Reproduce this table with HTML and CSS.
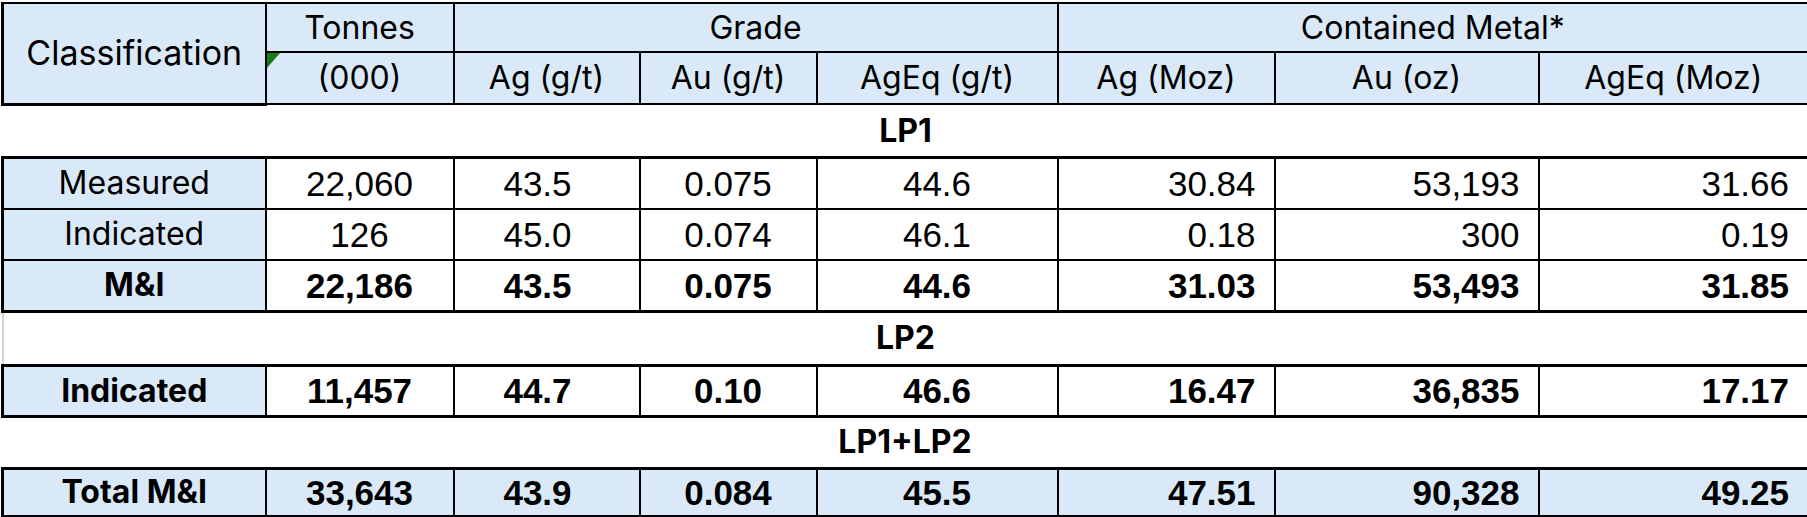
FILE: index.html
```html
<!DOCTYPE html>
<html lang="en">
<head>
<meta charset="utf-8">
<title>Mineral Resource Estimate</title>
<link rel="stylesheet" href="styles.css">
</head>
<body>
<table class="resources">
  <colgroup>
    <col class="c-class">
    <col class="c-tonnes">
    <col class="c-ag">
    <col class="c-au">
    <col class="c-ageq">
    <col class="c-agmoz">
    <col class="c-auoz">
    <col class="c-ageqmoz">
  </colgroup>
  <thead>
    <tr class="hdr1">
      <th rowspan="2" class="cls">Classification</th>
      <th>Tonnes</th>
      <th colspan="3">Grade</th>
      <th colspan="3" class="last">Contained Metal*</th>
    </tr>
    <tr class="hdr2">
      <th class="unit"><span class="flag"></span>(000)</th>
      <th>Ag (g/t)</th>
      <th>Au (g/t)</th>
      <th>AgEq (g/t)</th>
      <th>Ag (Moz)</th>
      <th>Au (oz)</th>
      <th class="last">AgEq (Moz)</th>
    </tr>
  </thead>
  <tbody>
    <tr class="section"><td colspan="8">LP1</td></tr>
    <tr class="data first r-meas">
      <td class="label">Measured</td>
      <td class="num ctr">22,060</td>
      <td class="num ag">43.5</td>
      <td class="num ctr">0.075</td>
      <td class="num ctr">44.6</td>
      <td class="num rt">30.84</td>
      <td class="num rt">53,193</td>
      <td class="num rt last">31.66</td>
    </tr>
    <tr class="data r-ind">
      <td class="label">Indicated</td>
      <td class="num ctr">126</td>
      <td class="num ag">45.0</td>
      <td class="num ctr">0.074</td>
      <td class="num ctr">46.1</td>
      <td class="num rt">0.18</td>
      <td class="num rt">300</td>
      <td class="num rt last">0.19</td>
    </tr>
    <tr class="data bold lastrow r-mi">
      <td class="label">M&amp;I</td>
      <td class="num ctr">22,186</td>
      <td class="num ag">43.5</td>
      <td class="num ctr">0.075</td>
      <td class="num ctr">44.6</td>
      <td class="num rt">31.03</td>
      <td class="num rt">53,493</td>
      <td class="num rt last">31.85</td>
    </tr>
    <tr class="section sec-lp2"><td colspan="8">LP2</td></tr>
    <tr class="data bold first lastrow r-lp2">
      <td class="label">Indicated</td>
      <td class="num ctr">11,457</td>
      <td class="num ag">44.7</td>
      <td class="num ctr">0.10</td>
      <td class="num ctr">46.6</td>
      <td class="num rt">16.47</td>
      <td class="num rt">36,835</td>
      <td class="num rt last">17.17</td>
    </tr>
    <tr class="section sec-all"><td colspan="8">LP1+LP2</td></tr>
    <tr class="data bold first lastrow total r-tot">
      <td class="label">Total M&amp;I</td>
      <td class="num ctr">33,643</td>
      <td class="num ag">43.9</td>
      <td class="num ctr">0.084</td>
      <td class="num ctr">45.5</td>
      <td class="num rt">47.51</td>
      <td class="num rt">90,328</td>
      <td class="num rt last">49.25</td>
    </tr>
  </tbody>
</table>
</body>
</html>
```
FILE: styles.css
```css
html, body {
  margin: 0;
  padding: 0;
  background: #ffffff;
}

body {
  padding: 2px 0 0 1px;
}

.resources {
  border-collapse: collapse;
  table-layout: fixed;
  width: 1806px;
  color: #000;
  font-family: "Inter", "Liberation Sans", sans-serif;
}

.c-class { width: 263px; }
.c-tonnes { width: 188px; }
.c-ag { width: 186px; }
.c-au { width: 177px; }
.c-ageq { width: 241px; }
.c-agmoz { width: 217px; }
.c-auoz { width: 264px; }
.c-ageqmoz { width: 270px; }

.resources th,
.resources td {
  padding: 0;
  line-height: 1;
  white-space: nowrap;
}

/* header */
.resources thead th {
  background: #dae9f8;
  font-weight: 400;
  font-size: 32px;
  text-align: center;
  vertical-align: middle;
  border: 2px solid #000;
}

.hdr1 th { border-top: 3px solid #000; height: 47px; }
.hdr2 th { border-bottom: 3px solid #000; height: 50px; }
.resources thead th.cls {
  border-left: 3px solid #000;
  border-bottom: 3px solid #000;
  font-size: 34px;
}
.resources thead th.last { border-right: 3px solid #000; }

.unit { position: relative; }
.flag {
  position: absolute;
  top: 0;
  left: 0;
  width: 0;
  height: 0;
  border-top: 15px solid #1b7a1b;
  border-right: 13px solid transparent;
}

/* section label rows */
.section td {
  text-align: center;
  vertical-align: middle;
  font-weight: 700;
  font-size: 32px;
  border: none;
  height: 50px;
  background: #fff;
}
.sec-lp2 td {
  height: 51px;
  border-left: 2px solid #d4d4d4;
  border-right: 2px solid #e4e4e4;
}
.sec-all td {
  height: 49px;
  border-right: 2px solid #000;
}

/* data rows */
.data td {
  border: 2px solid #000;
  vertical-align: middle;
  background: #fff;
  height: 49px;
}
.data td.label {
  background: #dae9f8;
  text-align: center;
  font-size: 32px;
  border-left: 3px solid #000;
}
.data td.last { border-right: 3px solid #000; }
.data.first td { border-top: 3px solid #000; }
.data.lastrow td { border-bottom: 3px solid #000; }
.r-lp2 td { height: 48px; }
.r-tot td { height: 45px; }

.data td.num {
  font-family: "Liberation Sans", Arial, sans-serif;
  font-size: 35px;
}
.data td.ctr { text-align: center; }
.data td.ag { text-align: center; padding-right: 18px; }
.data td.rt { text-align: right; padding-right: 18px; }

.data.bold td { font-weight: 700; }

.total td { background: #dae9f8; }
.data.total td.num { background: #dae9f8; }
```
